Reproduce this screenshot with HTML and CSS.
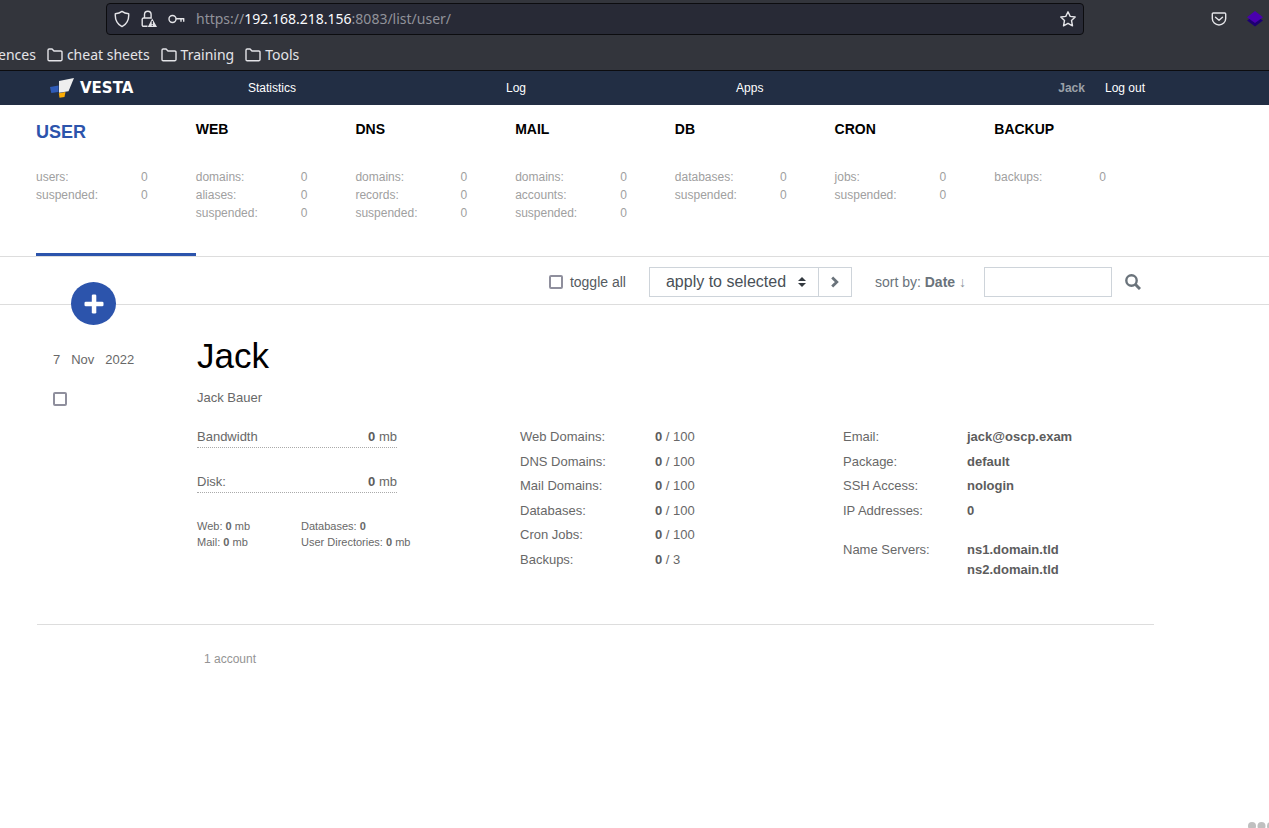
FILE: index.html
```html
<!DOCTYPE html>
<html lang="en">
<head>
<meta charset="utf-8">
<title>Vesta - USER</title>
<link rel="stylesheet" href="styles.css">
</head>
<body>
<header class="browser">
  <div class="address-row">
    <div class="address">
      <svg width="16" height="18" viewBox="0 0 16 18" fill="none" stroke="#e4e4e8" stroke-width="1.4" stroke-linejoin="round"><path d="M8 1.4C6 3 3.500 3.600 1.300 3.700C1 8 2 13.500 8 16.600C14 13.500 15 8 14.700 3.700C12.500 3.600 10 3 8 1.400Z"/></svg>
      <svg width="16" height="18" viewBox="0 0 16 18"><path d="M3.500 8V4.500a3.300 3.300 0 0 1 6.600 0V8M6.500 16.300H2.500A1.300 1.300 0 0 1 1.200 15V9.300A1.300 1.300 0 0 1 2.500 8h8.300" fill="none" stroke="#e4e4e8" stroke-width="1.4"/><path d="M11.200 8.500L16 17H6.800Z" fill="#e4e4e8"/><path d="M11.300 11v3M11.300 14.800v1" stroke="#282a36" stroke-width="1.200"/></svg>
      <svg width="17" height="18" viewBox="0 0 17 18" fill="none" stroke="#e4e4e8" stroke-width="1.400"><circle cx="4.500" cy="9" r="3.500"/><path d="M8 8.700h8.300M13 8.700v3M15.700 8.700v3"/></svg>
      <span class="url" role="textbox" aria-label="Address" contenteditable="true" spellcheck="false">https://<b>192.168.218.156</b>:8083/list/user/</span>
      <svg width="16" height="18" viewBox="0 0 16 18" fill="none" stroke="#e4e4e8" stroke-width="1.400" stroke-linejoin="round"><path d="M8 1.800L10.200 6.400L15.200 7L11.500 10.500L12.500 15.800L8 13.300L3.500 15.800L4.500 10.500L.8 7L5.800 6.400Z"/></svg>
    </div>
    <div class="extensions">
      <svg width="16" height="16" viewBox="0 0 16 16" fill="none" stroke="#e4e4e8" stroke-width="1.400" stroke-linecap="round" stroke-linejoin="round"><path d="M2.300 2h11.400a1 1 0 0 1 1 1v4.500a6.700 6.500 0 0 1-13.400 0V3a1 1 0 0 1 1-1Z"/><path d="M4.500 6.200L8 9.300L11.500 6.200"/></svg>
      <svg width="16" height="16" viewBox="0 0 16 16"><path d="M0 9.500L3 7.500H13L16 9.500L8 15.500Z" fill="#1d0072"/><path d="M8 0L16 6.200L8 12L0 6.200Z" fill="#4a00ae"/></svg>
    </div>
  </div>
  <nav class="bookmarks" aria-label="Bookmarks">
    <a href="#">ences</a>
    <a href="#"><svg class="folder" width="16" height="14" viewBox="0 0 16 14"><path d="M1 2.200A1.200 1.200 0 0 1 2.200 1H5l2 2h6.800A1.200 1.200 0 0 1 15 4.200v7.300a1.200 1.200 0 0 1-1.200 1.200H2.200A1.200 1.200 0 0 1 1 11.500Z"/></svg>cheat sheets</a>
    <a href="#"><svg class="folder" width="16" height="14" viewBox="0 0 16 14"><path d="M1 2.200A1.200 1.200 0 0 1 2.200 1H5l2 2h6.800A1.200 1.200 0 0 1 15 4.200v7.300a1.200 1.200 0 0 1-1.200 1.200H2.200A1.200 1.200 0 0 1 1 11.500Z"/></svg>Training</a>
    <a href="#"><svg class="folder" width="16" height="14" viewBox="0 0 16 14"><path d="M1 2.200A1.200 1.200 0 0 1 2.200 1H5l2 2h6.800A1.200 1.200 0 0 1 15 4.200v7.300a1.200 1.200 0 0 1-1.200 1.200H2.200A1.200 1.200 0 0 1 1 11.500Z"/></svg>Tools</a>
  </nav>
</header>

<nav class="topbar">
  <a class="logo" href="#"><svg width="24" height="20" viewBox="0 0 24 20"><path d="M0 9L8.500 7.500V14L1.300 15Z" fill="#2f5bb7"/><path d="M8.800 15.200L15.500 14L14.500 19L9.500 19.800Z" fill="#fcac04"/><path d="M9 3L24 0L18.500 13.300L9 14.700Z" fill="#eee"/></svg><span>VESTA</span></a>
  <div class="menu"><a href="#">Statistics</a><a href="#">Log</a><a href="#">Apps</a></div>
  <div class="account"><a class="me" href="#">Jack</a><a href="#">Log out</a></div>
</nav>

<section class="stats">
  <a class="stat active" href="#"><h2>USER</h2><span class="row"><span>users:</span><span>0</span></span><span class="row"><span>suspended:</span><span>0</span></span></a>
  <a class="stat" href="#"><h2>WEB</h2><span class="row"><span>domains:</span><span>0</span></span><span class="row"><span>aliases:</span><span>0</span></span><span class="row"><span>suspended:</span><span>0</span></span></a>
  <a class="stat" href="#"><h2>DNS</h2><span class="row"><span>domains:</span><span>0</span></span><span class="row"><span>records:</span><span>0</span></span><span class="row"><span>suspended:</span><span>0</span></span></a>
  <a class="stat" href="#"><h2>MAIL</h2><span class="row"><span>domains:</span><span>0</span></span><span class="row"><span>accounts:</span><span>0</span></span><span class="row"><span>suspended:</span><span>0</span></span></a>
  <a class="stat" href="#"><h2>DB</h2><span class="row"><span>databases:</span><span>0</span></span><span class="row"><span>suspended:</span><span>0</span></span></a>
  <a class="stat" href="#"><h2>CRON</h2><span class="row"><span>jobs:</span><span>0</span></span><span class="row"><span>suspended:</span><span>0</span></span></a>
  <a class="stat" href="#"><h2>BACKUP</h2><span class="row"><span>backups:</span><span>0</span></span></a>
</section>

<section class="toolbar">
  <button class="add" type="button" aria-label="Add user"><svg width="20" height="20" viewBox="0 0 20 20" fill="#fff"><rect x="7.800" y="0.500" width="4.500" height="19" rx="1.300"/><rect x="0.500" y="7.800" width="19" height="4.500" rx="1.300"/></svg></button>
  <label class="toggle"><input class="check" type="checkbox">toggle all</label>
  <form class="bulk">
    <div class="select-wrap">
      <select aria-label="Bulk action"><option>apply to selected</option></select>
      <svg class="arrows" width="8" height="10" viewBox="0 0 8 10"><path d="M4 0L8 4H0ZM4 10L0 6H8Z" fill="#343a40"/></svg>
    </div>
    <button class="go" type="button" aria-label="Apply"><svg width="10" height="12" viewBox="0 0 10 12"><path d="M2.200 1.500L6.800 6L2.200 10.500" fill="none" stroke="#6a737b" stroke-width="2.800"/></svg></button>
  </form>
  <a class="sort" href="#">sort by: <b>Date</b> <span class="arrow">↓</span></a>
  <form class="search">
    <input class="query" type="text" aria-label="Search">
    <button type="button" aria-label="Search"><svg width="16" height="16" viewBox="0 0 16 16" fill="none" stroke="#6a737b"><circle cx="6.500" cy="6.500" r="5.200" stroke-width="2.400"/><path d="M10.500 10.500L15 15" stroke-width="3"/></svg></button>
  </form>
</section>

<main>
  <article class="user">
    <div class="meta">
      <div class="date"><span>7</span><span>Nov</span><span>2022</span></div>
      <input class="check" type="checkbox" aria-label="Select Jack">
    </div>
    <div class="info">
      <h1>Jack</h1>
      <p class="fullname">Jack Bauer</p>
      <div class="details">
        <div class="usage">
          <div class="meter"><span>Bandwidth</span><span><b>0</b> mb</span></div>
          <div class="meter"><span>Disk:</span><span><b>0</b> mb</span></div>
          <div class="small">
            <span>Web: <b>0</b> mb</span><span>Databases: <b>0</b></span>
            <span>Mail: <b>0</b> mb</span><span>User Directories: <b>0</b> mb</span>
          </div>
        </div>
        <dl class="limits">
          <dt>Web Domains:</dt><dd><b>0</b> / 100</dd>
          <dt>DNS Domains:</dt><dd><b>0</b> / 100</dd>
          <dt>Mail Domains:</dt><dd><b>0</b> / 100</dd>
          <dt>Databases:</dt><dd><b>0</b> / 100</dd>
          <dt>Cron Jobs:</dt><dd><b>0</b> / 100</dd>
          <dt>Backups:</dt><dd><b>0</b> / 3</dd>
        </dl>
        <div>
          <dl class="access">
            <dt>Email:</dt><dd><b>jack@oscp.exam</b></dd>
            <dt>Package:</dt><dd><b>default</b></dd>
            <dt>SSH Access:</dt><dd><b>nologin</b></dd>
            <dt>IP Addresses:</dt><dd><b>0</b></dd>
          </dl>
          <dl class="servers">
            <dt>Name Servers:</dt><dd><b>ns1.domain.tld<br>ns2.domain.tld</b></dd>
          </dl>
        </div>
      </div>
    </div>
  </article>
  <p class="total">1 account</p>
</main>
<button class="more" type="button" aria-label="More"><svg width="21" height="6" viewBox="0 0 21 6" fill="#c0c0c0"><circle cx="4" cy="4" r="4"/><circle cx="13.500" cy="4" r="4"/><circle cx="23" cy="4" r="4"/></svg></button>
</body>
</html>
```

FILE: styles.css
```css
* { box-sizing: border-box; }
body {
  margin: 0;
  background: #fff;
  color: #686868;
  font: 13px/20px "Liberation Sans", Arial, sans-serif;
}
a { color: inherit; text-decoration: none; }
h1, h2, p, dl, dd { margin: 0; }
button { padding: 0; border: 0; background: none; }
svg { display: block; flex: none; }

.browser {
  background: #33353c;
  border-bottom: 1px solid #0c0c0f;
  color: #e4e4e8;
  font: 14px/20px "Noto Sans", sans-serif;
}
.address-row { display: flex; align-items: center; padding: 3px 6px 0 106px; }
.address {
  display: flex;
  flex: 1;
  align-items: center;
  gap: 11px;
  height: 32px;
  padding: 0 7px;
  background: #282a36;
  border: 1px solid #0c0c0f;
  border-radius: 4px;
}
.url { flex: 1; color: #91929a; }
.url b { color: #fbfbfe; font-weight: 400; }
.extensions { display: flex; gap: 20px; padding-left: 127px; }
.bookmarks { display: flex; gap: 11px; padding: 10px 0 5px; overflow: hidden; }
.bookmarks a { display: flex; align-items: center; gap: 4px; }
.bookmarks a:first-child { margin-left: -2px; }
.folder { fill: none; stroke: #e4e4e8; stroke-width: 1.4; }

.topbar {
  display: flex;
  align-items: center;
  height: 34px;
  padding: 0 124px 0 50px;
  background: #222e44;
  color: #fff;
  font-size: 12px;
}
.logo {
  display: flex;
  align-items: center;
  gap: 6px;
  width: 198px;
  font: bold 15px/20px "DejaVu Sans", sans-serif;
}
.menu { display: flex; flex: 1; gap: 210px; }
.account { display: flex; gap: 20px; }
.me { color: #9ba0a8; font-weight: 700; }

.stats {
  display: grid;
  grid-template-columns: repeat(7, 1fr);
  padding: 0 115px 0 36px;
  border-bottom: 1px solid #ddd;
}
.stat {
  min-height: 151px;
  padding: 14px 48px 0 0;
  border-bottom: 3px solid transparent;
  color: #a0a0a0;
  font-size: 12px;
  line-height: 18px;
}
.stat h2 {
  height: 49px;
  color: #000;
  font-size: 14px;
  line-height: 20px;
}
.stat .row { display: flex; justify-content: space-between; }
.active { border-color: #2c54ac; }
.active h2 { color: #2c54ac; font-size: 18px; line-height: 26px; }

.toolbar {
  position: relative;
  display: flex;
  align-items: center;
  justify-content: flex-end;
  height: 48px;
  padding: 2px 128px 0 36px;
  border-bottom: 1px solid #ddd;
  font-size: 14px;
}
.add {
  position: absolute;
  left: 71px;
  top: 25px;
  display: grid;
  place-items: center;
  width: 45px;
  height: 43px;
  border-radius: 50%;
  background: #2c54ac;
}
.check {
  appearance: none;
  width: 14px;
  height: 14px;
  margin: 0;
  border: 2px solid #8f8f9d;
  border-radius: 2px;
  background: #fff;
}
.toggle { display: flex; align-items: center; gap: 7px; color: #555b61; }
.bulk { display: flex; margin-left: 23px; border: 1px solid #ced4da; }
.select-wrap { position: relative; }
.bulk select {
  appearance: none;
  display: block;
  width: 168px;
  height: 28px;
  padding: 0 16px;
  border: 0;
  background: #fff;
  color: #495057;
  font: 16px "Liberation Sans", Arial, sans-serif;
}
.arrows { position: absolute; right: 12px; top: 9px; pointer-events: none; }
.go { display: grid; place-items: center; width: 33px; border-left: 1px solid #ced4da; }
.sort { margin-left: 23px; color: #6a737b; }
.arrow { color: #8c949b; }
.search { display: flex; align-items: center; gap: 13px; margin-left: 18px; }
.query { width: 128px; height: 30px; border: 1px solid #ced4da; }

main { padding: 0 115px 0 37px; }
.user {
  display: flex;
  padding: 31px 0 44px;
  border-bottom: 1px solid #ddd;
}
.meta { width: 160px; padding: 14px 0 0 16px; }
.date { display: flex; gap: 11px; margin-bottom: 22px; }
.meta .check { display: block; }
.info { flex: 1; }
h1 { color: #000; font-size: 35px; font-weight: 400; line-height: 40px; }
.fullname { margin: 12px 0 17px; }
.details { display: grid; grid-template-columns: 323px 323px 1fr; }
.usage { padding-top: 2px; }
.meter {
  display: flex;
  justify-content: space-between;
  width: 200px;
  margin-bottom: 24px;
  border-bottom: 1px dotted #aaa;
}
.meter b, dd b { color: #5c5c5c; }
.small {
  display: grid;
  grid-template-columns: 104px max-content;
  padding-top: 1px;
  font-size: 11px;
  line-height: 16px;
}
dl { display: grid; align-items: center; }
.limits { grid-template: repeat(6, 1fr) / 135px 1fr; height: 147px; }
.access { grid-template: repeat(4, 1fr) / 124px 1fr; height: 98px; }
.servers { grid-template-columns: 124px 1fr; align-items: start; padding-top: 17px; }
.total { padding: 24px 0 0 167px; color: #949494; font-size: 12px; }
.more { position: fixed; right: 0; bottom: 0; }
```
